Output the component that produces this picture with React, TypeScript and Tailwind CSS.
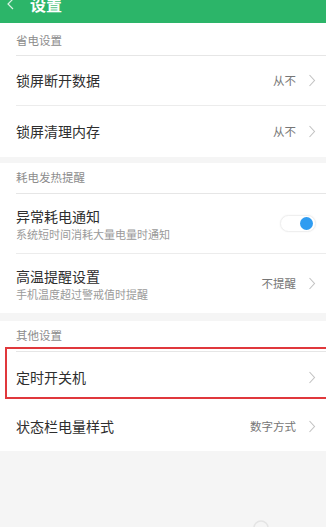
import React from "react";

const font = { fontFamily: '"Noto Sans CJK SC", "Noto Sans", sans-serif' };

function Chevron() {
  return (
    <svg width="8" height="13" viewBox="0 0 8 13" className="shrink-0">
      <path d="M1.5 1 L6.5 6.5 L1.5 12" fill="none" stroke="#c2c2c2" strokeWidth="1.1" />
    </svg>
  );
}

function SectionHeader({ text, h }: { text: string; h: string }) {
  return (
    <div className={`ml-4 flex items-center border-b border-[#e6e6e6] text-[11.5px] text-[#8c8c8c] ${h}`}>
      {text}
    </div>
  );
}

function Row({ title, value, h, border }: { title: string; value?: string; h: string; border?: boolean }) {
  return (
    <div className={`ml-4 flex items-center pr-[10px] ${h} ${border ? "border-b border-[#ececec]" : ""}`}>
      <div className="flex-1 text-[14px] text-[#2e2e2e]">{title}</div>
      {value && <div className="mr-[12px] text-[11.5px] text-[#767676]">{value}</div>}
      <Chevron />
    </div>
  );
}

export default function App() {
  return (
    <div className="relative h-[527px] w-[326px] overflow-hidden bg-[#f5f5f5]" style={font}>
      <div className="h-[23px] overflow-hidden bg-[#2cb569]">
        <div className="-mt-[10px] flex h-[28px] items-center pl-[7px] text-white">
          <svg width="7" height="12" viewBox="0 0 7 12">
            <path d="M6 1 L1 6 L6 11" fill="none" stroke="#d9f2e3" strokeWidth="1.2" />
          </svg>
          <span className="ml-[16px] text-[16px] font-bold">设置</span>
        </div>
      </div>

      <div className="bg-white">
        <div className="ml-4 flex h-[33px] items-center border-b border-[#e6e6e6] pt-[3px] text-[11.5px] text-[#8c8c8c]">省电设置</div>
        <Row title="锁屏断开数据" value="从不" h="h-[50px]" border />
        <Row title="锁屏清理内存" value="从不" h="h-[51px]" />
      </div>

      <div className="mt-[6px] bg-white">
        <SectionHeader text="耗电发热提醒" h="h-[31px]" />
        <div className="ml-4 flex h-[60px] items-center border-b border-[#ececec] pr-[10px]">
          <div className="flex-1">
            <div className="text-[14px] leading-[20px] text-[#2e2e2e]">异常耗电通知</div>
            <div className="text-[11px] leading-[16px] text-[#9a9a9a]">系统短时间消耗大量电量时通知</div>
          </div>
          <div className="flex h-[17px] w-[36px] items-center justify-end rounded-full border border-[#efefef] bg-white pr-[2px] shadow-[0_0_2px_rgba(0,0,0,0.06)]">
            <div className="h-[13px] w-[13px] rounded-full bg-[#2f9cf1]" />
          </div>
        </div>
        <div className="ml-4 flex h-[59px] items-center pr-[10px]">
          <div className="flex-1">
            <div className="text-[14px] leading-[20px] text-[#2e2e2e]">高温提醒设置</div>
            <div className="text-[11px] leading-[16px] text-[#9a9a9a]">手机温度超过警戒值时提醒</div>
          </div>
          <div className="mr-[12px] text-[11.5px] text-[#767676]">不提醒</div>
          <Chevron />
        </div>
      </div>

      <div className="relative mt-[8px] bg-white">
        <SectionHeader text="其他设置" h="h-[31px]" />
        <Row title="定时开关机" h="h-[50px]" />
        <Row title="状态栏电量样式" value="数字方式" h="h-[49px]" />
        <div className="absolute left-[5px] right-[-3px] top-[26px] h-[52px] border-2 border-[#e0383c]" />
      </div>

      <svg className="absolute left-[252px] top-[519px]" width="18" height="10" viewBox="0 0 18 10">
        <circle cx="9" cy="9" r="7" fill="none" stroke="#e4e4e4" strokeWidth="1.5" />
      </svg>
    </div>
  );
}
